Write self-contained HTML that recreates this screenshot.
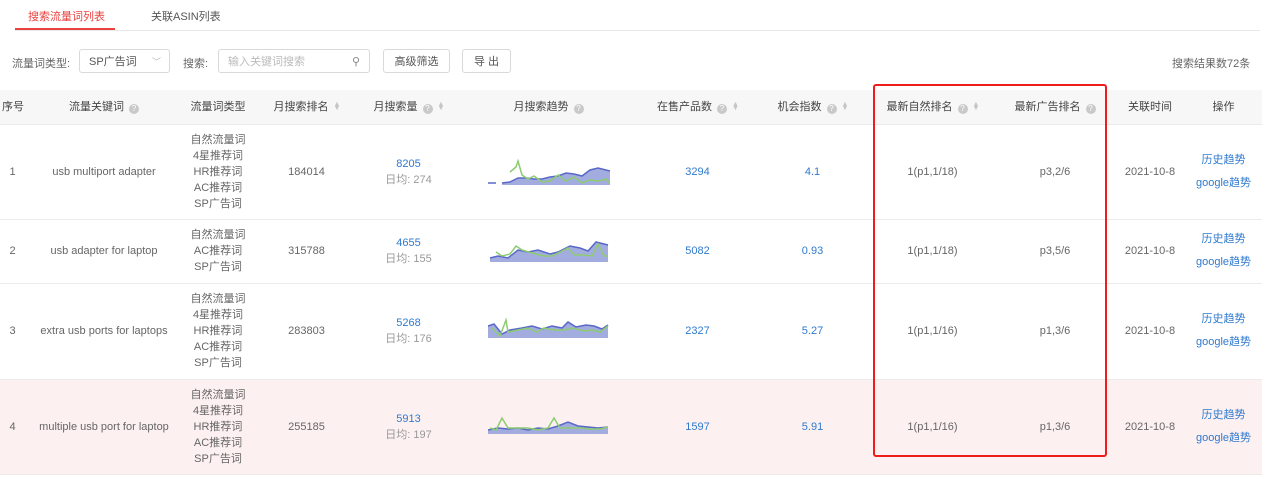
<!DOCTYPE html>
<html><head><meta charset="utf-8"><style>
*{margin:0;padding:0;box-sizing:border-box}
body{width:1267px;height:479px;background:#fff;font-family:"Liberation Sans","Noto Sans CJK SC",sans-serif;font-size:11px;color:#666;position:relative;overflow:hidden}
.abs{position:absolute}
.tab{top:8px;font-size:11px}
.btn{position:absolute;top:49px;height:24px;border:1px solid #d9d9d9;border-radius:3px;background:#fff;display:flex;align-items:center;justify-content:center;color:#555}
table{position:absolute;left:0;top:90px;border-collapse:collapse;table-layout:fixed;width:1262px}
td,th{text-align:center;vertical-align:middle;font-weight:normal;border-bottom:1px solid #ebebeb;line-height:16px}
td{color:#666}
th{background:#f7f7f7;height:34px;color:#444}
.q{display:inline-block;width:10px;height:10px;border-radius:50%;background:#c9c9c9;color:#fff;font-size:8px;line-height:10px;vertical-align:-1px;margin-left:5px}
.s{display:inline-block;color:#c6c6c6;font-size:7px;line-height:4px;vertical-align:0;margin-left:5px;width:6px}
a{color:#2f7ad0;text-decoration:none}
.lk{line-height:23px}
.pink td{background:#fdf0f0}
svg{display:block;margin:0 auto}
</style></head><body>
<div class="abs tab" style="left:28px;color:#e8423f">搜索流量词列表</div>
<div class="abs tab" style="left:151px;color:#555">关联ASIN列表</div>
<div class="abs" style="left:15px;top:28px;width:100px;height:2px;background:#e8423f"></div>
<div class="abs" style="left:15px;top:30px;width:1245px;height:1px;background:#e8e8e8"></div>

<div class="abs" style="left:12px;top:55px">流量词类型:</div>
<div class="btn" style="left:79px;width:91px;justify-content:flex-start;padding-left:9px">SP广告词<span style="position:absolute;right:8px;color:#bbb;font-size:9px">﹀</span></div>
<div class="abs" style="left:183px;top:55px">搜索:</div>
<div class="btn" style="left:218px;width:152px;justify-content:flex-start;padding-left:9px;color:#bbb">输入关键词搜索<span style="position:absolute;right:9px;color:#888">&#9906;</span></div>
<div class="btn" style="left:383px;width:67px">高级筛选</div>
<div class="btn" style="left:462px;width:49px">导 出</div>
<div class="abs" style="left:1172px;top:55px;color:#666">搜索结果数72条</div>

<table>
<colgroup><col style="width:25px"><col style="width:158px"><col style="width:70px"><col style="width:107px"><col style="width:97px"><col style="width:183px"><col style="width:115px"><col style="width:115px"><col style="width:125px"><col style="width:120px"><col style="width:70px"><col style="width:77px"></colgroup>
<tr><th style="text-align:left;padding-left:2px">序号</th><th>流量关键词<span class="q">?</span></th><th>流量词类型</th><th>月搜索排名<span class="s">▲<br>▼</span></th><th>月搜索量<span class="q">?</span><span class="s">▲<br>▼</span></th><th>月搜索趋势<span class="q">?</span></th><th>在售产品数<span class="q">?</span><span class="s">▲<br>▼</span></th><th>机会指数<span class="q">?</span><span class="s">▲<br>▼</span></th><th>最新自然排名<span class="q">?</span><span class="s">▲<br>▼</span></th><th>最新广告排名<span class="q">?</span></th><th>关联时间</th><th>操作</th></tr>

<tr style="height:95px"><td>1</td><td>usb multiport adapter</td><td>自然流量词<br>4星推荐词<br>HR推荐词<br>AC推荐词<br>SP广告词</td><td>184014</td><td><a>8205</a><br><span style="color:#999">日均: 274</span></td>
<td><svg width="122" height="30"><path d="M14,26 L22,25 L30,21 L38,21 L46,22 L54,22 L62,20 L70,19 L78,16 L86,17 L94,19 L102,13 L110,11 L118,13 L122,14 L122,28 L14,28Z" fill="#a3acdf"/><polyline points="0,26 8,26" fill="none" stroke="#5968c8" stroke-width="1.5"/><polyline points="14,26 22,25 30,21 38,21 46,22 54,22 62,20 70,19 78,16 86,17 94,19 102,13 110,11 118,13 122,14" fill="none" stroke="#5968c8" stroke-width="1.5"/><polyline points="22,15 28,10 30,4 34,18 40,22 46,19 54,25 62,24 70,18 78,24 86,20 94,26 102,23 110,24 118,22 122,27" fill="none" stroke="#8ccc70" stroke-width="1.5"/></svg></td>
<td><a>3294</a></td><td><a>4.1</a></td><td>1(p1,1/18)</td><td>p3,2/6</td><td>2021-10-8</td><td class="lk"><a>历史趋势</a><br><a>google趋势</a></td></tr>

<tr style="height:64px"><td>2</td><td>usb adapter for laptop</td><td>自然流量词<br>AC推荐词<br>SP广告词</td><td>315788</td><td><a>4655</a><br><span style="color:#999">日均: 155</span></td>
<td><svg width="122" height="30"><path d="M2,22 L10,20 L20,22 L30,14 L40,16 L50,14 L62,18 L70,16 L82,10 L92,12 L100,15 L108,6 L116,8 L120,9 L120,26 L2,26Z" fill="#a3acdf"/><polyline points="2,22 10,20 20,22 30,14 40,16 50,14 62,18 70,16 82,10 92,12 100,15 108,6 116,8 120,9" fill="none" stroke="#5968c8" stroke-width="1.5"/><polyline points="8,16 14,20 22,18 28,10 34,14 44,17 56,20 64,20 74,15 80,12 86,19 96,19 104,20 110,8 116,20 120,20" fill="none" stroke="#8ccc70" stroke-width="1.5"/></svg></td>
<td><a>5082</a></td><td><a>0.93</a></td><td>1(p1,1/18)</td><td>p3,5/6</td><td>2021-10-8</td><td class="lk"><a>历史趋势</a><br><a>google趋势</a></td></tr>

<tr style="height:96px"><td>3</td><td>extra usb ports for laptops</td><td>自然流量词<br>4星推荐词<br>HR推荐词<br>AC推荐词<br>SP广告词</td><td>283803</td><td><a>5268</a><br><span style="color:#999">日均: 176</span></td>
<td><svg width="122" height="30"><path d="M0,10 L6,8 L14,18 L22,14 L34,12 L44,10 L54,13 L64,10 L74,12 L80,6 L88,11 L98,9 L106,10 L114,13 L120,9 L120,22 L0,22Z" fill="#a3acdf"/><polyline points="0,10 6,8 14,18 22,14 34,12 44,10 54,13 64,10 74,12 80,6 88,11 98,9 106,10 114,13 120,9" fill="none" stroke="#5968c8" stroke-width="1.5"/><polyline points="4,12 12,20 18,4 20,16 30,14 40,12 48,16 56,12 66,14 76,14 84,12 96,15 104,14 112,16 120,10" fill="none" stroke="#8ccc70" stroke-width="1.5"/></svg></td>
<td><a>2327</a></td><td><a>5.27</a></td><td>1(p1,1/16)</td><td>p1,3/6</td><td>2021-10-8</td><td class="lk"><a>历史趋势</a><br><a>google趋势</a></td></tr>

<tr class="pink" style="height:95px"><td>4</td><td>multiple usb port for laptop</td><td>自然流量词<br>4星推荐词<br>HR推荐词<br>AC推荐词<br>SP广告词</td><td>255185</td><td><a>5913</a><br><span style="color:#999">日均: 197</span></td>
<td><svg width="122" height="30"><path d="M0,18 L10,16 L20,17 L30,16 L40,18 L50,16 L60,17 L70,14 L80,10 L90,14 L100,15 L110,16 L120,15 L120,22 L0,22Z" fill="#a3acdf"/><polyline points="0,18 10,16 20,17 30,16 40,18 50,16 60,17 70,14 80,10 90,14 100,15 110,16 120,15" fill="none" stroke="#5968c8" stroke-width="1.5"/><polyline points="2,16 8,18 14,6 20,16 30,16 40,16 50,18 60,16 66,6 72,16 82,16 92,16 102,17 112,17 120,15" fill="none" stroke="#8ccc70" stroke-width="1.5"/></svg></td>
<td><a>1597</a></td><td><a>5.91</a></td><td>1(p1,1/16)</td><td>p1,3/6</td><td>2021-10-8</td><td class="lk"><a>历史趋势</a><br><a>google趋势</a></td></tr>
</table>
<div class="abs" style="left:873px;top:84px;width:234px;height:373px;border:2px solid #f01c1c;border-radius:3px"></div>
</body></html>
